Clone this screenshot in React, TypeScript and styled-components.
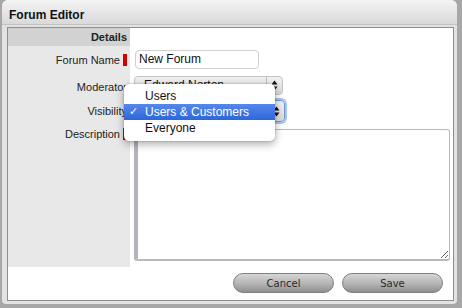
import styled, { createGlobalStyle } from 'styled-components';

const GlobalStyle = createGlobalStyle`
  html, body {
    margin: 0;
    padding: 0;
    background: #a7a7a7;
    font-family: "Liberation Sans", Arial, sans-serif;
  }
  * { box-sizing: border-box; }
`;

const Window = styled.div`
  width: 455px;
  height: 304px;
  margin-left: 2px;
  background: #e2e2e2;
  border-radius: 6px 6px 4px 4px;
  display: flex;
  flex-direction: column;
  overflow: hidden;
`;

const TitleBar = styled.div`
  height: 25px;
  padding: 8px 7px 0;
  background: linear-gradient(to bottom, #f4f4f4, #d9d9d9);
  border-bottom: 1px solid #c2c2c2;
  font-weight: bold;
  font-size: 12px;
  line-height: 14px;
  color: #111;
`;

const Body = styled.div`
  flex: 1;
  padding: 2px 3px 3px 5px;
  display: flex;
`;

const Panel = styled.div`
  flex: 1;
  border: 1px solid #8e8e8e;
  background: #fff;
  display: flex;
  flex-direction: column;
`;

const FormGrid = styled.div`
  display: grid;
  grid-template-columns: 122px 1fr;
  grid-template-rows: 18px 27px 24px 28px 142px;
`;

const HeaderCell = styled.div`
  background: #d2d2d2;
  font-weight: bold;
  font-size: 11px;
  color: #222;
  text-align: right;
  padding-right: 3px;
  line-height: 18px;
`;

const Blank = styled.div``;

const Label = styled.div<{ $top?: boolean }>`
  background: #e8e8e8;
  display: flex;
  justify-content: flex-end;
  align-items: ${(p) => (p.$top ? 'flex-start' : 'center')};
  padding: ${(p) => (p.$top ? '3px 3px 0 0' : '0 3px 0 0')};
  gap: 3px;
  font-size: 11px;
  color: #222;
`;

const Required = styled.span`
  width: 4px;
  height: 12px;
  background: #d40000;
`;

const Field = styled.div<{ $top?: boolean }>`
  display: flex;
  align-items: ${(p) => (p.$top ? 'flex-start' : 'center')};
  padding: ${(p) => (p.$top ? '4px 3px 6px 4px' : '0 0 0 4px')};
`;

const TextInput = styled.div`
  width: 124px;
  height: 19px;
  margin-left: 1px;
  border: 1px solid #cfcfcf;
  border-radius: 4px;
  padding-left: 3px;
  font-size: 12px;
  line-height: 17px;
  color: #111;
`;

const Select = styled.div<{ $focused?: boolean }>`
  position: relative;
  width: ${(p) => (p.$focused ? '151px' : '149px')};
  height: ${(p) => (p.$focused ? '22px' : '19px')};
  border-radius: 4px;
  background: linear-gradient(to bottom, #f2f2f2, #d9d9d9);
  border: 1px solid ${(p) => (p.$focused ? '#6b9ad6' : '#c4c4c4')};
  box-shadow: ${(p) => (p.$focused ? '0 0 0 2px #a7c4ea' : 'none')};
  display: flex;
  font-size: 12px;
  color: #111;
`;

const SelectText = styled.div`
  flex: 1;
  padding-left: 9px;
  line-height: 17px;
  white-space: nowrap;
  overflow: hidden;
`;

const Arrows = styled.div`
  width: 16px;
  border-left: 1px solid #bdbdbd;
  display: flex;
  align-items: center;
  justify-content: center;
`;

const Menu = styled.div`
  position: absolute;
  left: -11px;
  top: -17px;
  width: 151px;
  padding: 4px 0 5px;
  background: #fff;
  border-radius: 5px;
  box-shadow: 0 3px 9px rgba(0, 0, 0, 0.35), 0 0 0 1px rgba(0, 0, 0, 0.08);
  z-index: 2;
`;

const MenuItem = styled.div<{ $active?: boolean }>`
  position: relative;
  height: 16px;
  line-height: 16px;
  padding-left: 21px;
  font-size: 12px;
  color: ${(p) => (p.$active ? '#fff' : '#111')};
  background: ${(p) => (p.$active ? 'linear-gradient(to bottom, #5588ec, #2e66da)' : 'transparent')};
`;

const Check = styled.span`
  position: absolute;
  left: 5px;
  top: 0;
  font-family: "DejaVu Sans", sans-serif;
  font-weight: bold;
  font-size: 11px;
`;

const TextArea = styled.textarea`
  width: 100%;
  height: 132px;
  margin: 0;
  border: 1px solid #b6bac0;
  border-left: 4px solid #b2b6bc;
  border-bottom-width: 2px;
  border-radius: 3px;
  resize: both;
  outline: none;
  background: #fff;
`;

const Footer = styled.div`
  display: flex;
  justify-content: flex-end;
  gap: 8px;
  padding: 6px 10px 0 0;
`;

const Button = styled.button`
  width: 101px;
  height: 20px;
  border-radius: 10px;
  border: 1px solid #7f7f7f;
  background: linear-gradient(to bottom, #d6d6d6, #b3b3b3 55%, #8f8f8f);
  font-family: "DejaVu Sans", Verdana, sans-serif;
  font-size: 10px;
  color: #2a2a2a;
  padding: 0;
`;

function UpDown() {
  return (
    <svg width="7" height="11" viewBox="0 0 7 11">
      <path d="M3.5 0.5 L6.5 4.5 H0.5 Z" fill="#111" />
      <path d="M3.5 10.5 L6.5 6.5 H0.5 Z" fill="#111" />
    </svg>
  );
}

export default function App() {
  return (
    <>
      <GlobalStyle />
      <Window>
        <TitleBar>Forum Editor</TitleBar>
        <Body>
          <Panel>
            <FormGrid>
              <HeaderCell>Details</HeaderCell>
              <Blank />

              <Label>Forum Name<Required /></Label>
              <Field><TextInput>New Forum</TextInput></Field>

              <Label style={{ paddingTop: 3 }}>Moderator</Label>
              <Field>
                <Select>
                  <SelectText>Edward Norton</SelectText>
                  <Arrows><UpDown /></Arrows>
                </Select>
              </Field>

              <Label>Visibility</Label>
              <Field>
                <Select $focused>
                  <SelectText>Users &amp; Customers</SelectText>
                  <Arrows><UpDown /></Arrows>
                  <Menu>
                    <MenuItem>Users</MenuItem>
                    <MenuItem $active><Check>✓</Check>Users &amp; Customers</MenuItem>
                    <MenuItem>Everyone</MenuItem>
                  </Menu>
                </Select>
              </Field>

              <Label $top>Description<Required /></Label>
              <Field $top><TextArea /></Field>
            </FormGrid>
            <Footer>
              <Button>Cancel</Button>
              <Button>Save</Button>
            </Footer>
          </Panel>
        </Body>
      </Window>
    </>
  );
}
